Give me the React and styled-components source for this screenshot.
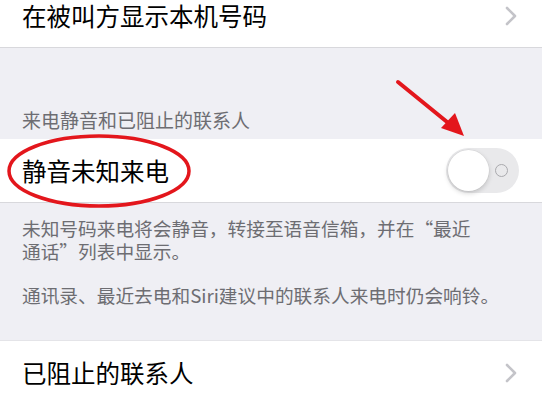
import React from "react";
import styled, { createGlobalStyle } from "styled-components";

const GlobalStyle = createGlobalStyle`
  html, body {
    margin: 0;
    padding: 0;
    background: #efeff4;
  }
  body {
    font-family: "Noto Sans CJK SC", "Noto Sans", sans-serif;
    overflow: hidden;
  }
`;

function Chevron() {
    return (
        <svg width="14" height="20" viewBox="0 0 14 20">
            <path d="M3 2 L11 10 L3 18" fill="none" stroke="#c4c4c9" strokeWidth="2.6" strokeLinecap="round" strokeLinejoin="round" />
        </svg>
    );
}

export default function App() {
    return (
        <Page>
            <GlobalStyle />
            <Row $top>
                <Label>在被叫方显示本机号码</Label>
                <ChevronBox>
                    <Chevron />
                </ChevronBox>
            </Row>

            <SectionHeader>来电静音和已阻止的联系人</SectionHeader>

            <Row>
                <Label>静音未知来电</Label>
                <Switch>
                    <Knob />
                    <OffMark />
                </Switch>
            </Row>

            <Footer>
                <p>未知号码来电将会静音，转接至语音信箱，并在“最近<br />通话”列表中显示。</p>
                <p>通讯录、最近去电和Siri建议中的联系人来电时仍会响铃。</p>
            </Footer>

            <Row $last>
                <Label>已阻止的联系人</Label>
                <ChevronBox>
                    <Chevron />
                </ChevronBox>
            </Row>

            <Marks width="542" height="402" viewBox="0 0 542 402">
                <ellipse cx="99" cy="171" rx="90" ry="35" fill="none" stroke="#e3161c" strokeWidth="3.5" />
                <line x1="398" y1="82" x2="452" y2="126" stroke="#e3161c" strokeWidth="4" strokeLinecap="round" />
                <polygon points="464,136 441,128 455,113" fill="#e3161c" />
            </Marks>
        </Page>
    );
}

const Page = styled.div`
  position: relative;
  width: 542px;
  height: 402px;
  overflow: hidden;
  background: #efeff4;
`;

const Row = styled.div`
  display: flex;
  align-items: center;
  justify-content: space-between;
  height: 63px;
  margin-top: ${(p) => (p.$top ? "-16px" : "0")};
  padding: 0 24px 0 22px;
  background: #ffffff;
  border-bottom: ${(p) => (p.$last ? "none" : "1px solid #d8d8dc")};
  border-top: ${(p) => (p.$last ? "1px solid #e4e4e8" : "none")};
`;

const Label = styled.span`
  font-size: 24.5px;
  font-weight: 400;
  line-height: 30px;
  color: #000000;
`;

const ChevronBox = styled.span`
  display: flex;
`;

const SectionHeader = styled.div`
  padding: 60px 22px 8px;
  font-size: 19px;
  line-height: 23px;
  color: #6d6d72;
`;

const Footer = styled.div`
  padding: 13px 22px 34px;
  font-size: 18.7px;
  line-height: 23px;
  color: #6d6d72;

  p {
    margin: 0;
  }
  p + p {
    margin-top: 21px;
  }
`;

const Switch = styled.div`
  display: flex;
  align-items: center;
  width: 73px;
  height: 45px;
  margin-right: -1px;
  border-radius: 23px;
  background: #e9e9eb;
`;

const Knob = styled.div`
  width: 41px;
  height: 41px;
  margin-left: 2px;
  border-radius: 50%;
  background: #ffffff;
  box-shadow: 0 2px 5px rgba(0, 0, 0, 0.18), 0 0 0 0.5px rgba(0, 0, 0, 0.06);
`;

const OffMark = styled.div`
  width: 11px;
  height: 11px;
  margin-left: 6px;
  border-radius: 50%;
  border: 1.8px solid #a9a9ad;
`;

const Marks = styled.svg`
  position: absolute;
  top: 0;
  left: 0;
  pointer-events: none;
`;
